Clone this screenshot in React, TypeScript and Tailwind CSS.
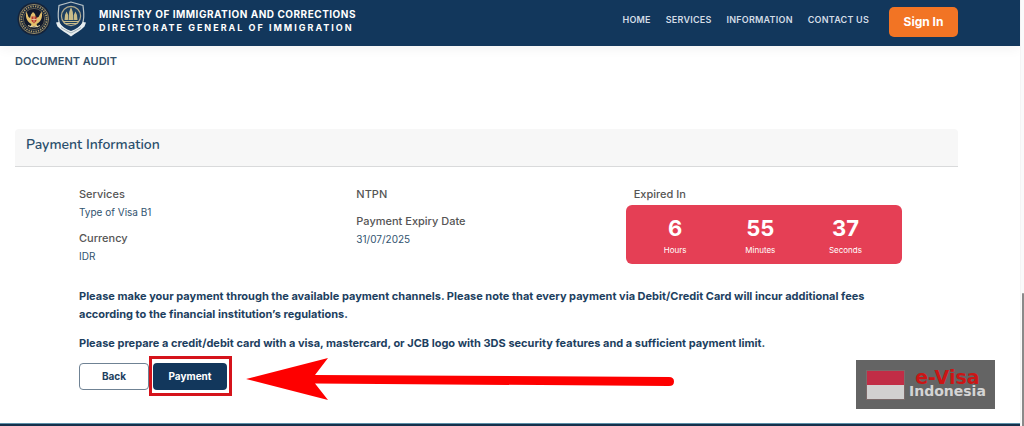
import React from "react";

const navItems = ["Home", "Services", "Information", "Contact Us"];

const countdown = [
  { value: "6", label: "Hours" },
  { value: "55", label: "Minutes" },
  { value: "37", label: "Seconds" },
];

function GarudaLogo() {
  return (
    <svg viewBox="0 0 34 34" className="mt-px h-[34px] w-[34px]" aria-hidden="true">
      <circle cx="17" cy="17" r="16.5" fill="#14233a" />
      <circle
        cx="17"
        cy="17"
        r="14.6"
        fill="none"
        stroke="#8d8263"
        strokeWidth="1"
      />
      <circle
        cx="17"
        cy="17"
        r="12.6"
        fill="none"
        stroke="#a99767"
        strokeWidth="1.8"
        strokeDasharray="1.3 1.1"
      />
      <circle cx="17" cy="17" r="10.6" fill="#10182a" stroke="#8d8263" strokeWidth=".6" />
      <path
        d="M9.500 9.500c-1.500 5 0 10 5 12.500l-1.500 3.500 4-1.500 4 1.500-1.500-3.500c5-2.500 6.500-7.500 5-12.500l-3 5.500-2.500 1-1-4-2-2-2 2.500-1 3.500-1.500-1z"
        fill="#e3bf6c"
      />
      <path d="M14.500 14.500h5v4.500L17 21.500 14.500 19z" fill="#b5352b" />
      <path d="M17 14.500v6M14.500 17.500h5" stroke="#f1dfb0" strokeWidth=".7" />
      <path d="M11 23.600c4 1.800 8 1.800 12 0" stroke="#e9dcae" fill="none" />
    </svg>
  );
}

function ImmigrationLogo() {
  return (
    <svg viewBox="0 0 32 36" className="h-9 w-8" aria-hidden="true">
      <path
        d="M16 1 4 4.500C3.500 10 2 16 4.500 22.500 7 27.500 11 30 16 33c5-3 9-5.500 11.500-10.500C30 16 28.500 10 28 4.500z"
        fill="#17395e"
        stroke="#b9c4c8"
        strokeWidth="1.200"
      />
      <circle cx="16" cy="15" r="9.600" fill="#1d3f60" stroke="#b3ab8d" strokeWidth="1.200" />
      <path
        d="M16 6 14.200 11l-.7 8h5l-.7-8zM11.600 10.500 10 14l-.5 5h3.400l.3-5zM20.400 10.500 18.800 14l.3 5h3.400l-.5-5z"
        fill="#c9bb88"
      />
      <path d="M8 20.500h16M9.500 22.500h13" stroke="#c9bb88" strokeWidth="1.100" />
      <path
        d="M1 21.500 4 21c2.500 4.500 7 7 12 9 5-2 9.500-4.500 12-9l3 .5-1.500 4C26 29.500 20.500 32 16 35.500 11.500 32 6 29.500 2.500 25.500z"
        fill="#e7edef"
      />
      <path d="M6 26.500c3 2 6 3.500 10 5.500 4-2 7-3.500 10-5.500" stroke="#8fa0a8" strokeWidth=".8" fill="none" />
    </svg>
  );
}

function Field({ label, value }: { label: string; value?: string }) {
  return (
    <div className="mb-[7px]">
      <dt className="text-[11px] font-medium leading-5 text-[#555555]">
        {label}
      </dt>
      {value && (
        <dd className="text-[10px] leading-[17px] text-[#31536f]">{value}</dd>
      )}
    </div>
  );
}

function Header() {
  return (
    <header className="h-[46px] bg-[#12375c] pl-[17px] pr-[62px] shadow-[0_2px_12px_rgba(0,0,0,0.06)]">
      <div className="flex h-[42px] items-center justify-between">
        <a href="#" className="flex h-[42px] items-start gap-1 pt-px">
          <GarudaLogo />
          <ImmigrationLogo />
          <span className="ml-2 flex flex-col pt-[6px] text-white">
            <span className="text-[10px] font-bold leading-[14px] tracking-wider">
              MINISTRY OF IMMIGRATION AND CORRECTIONS
            </span>
            <span className="text-[9px] font-bold leading-[14px] tracking-[2px]">
              DIRECTORATE GENERAL OF IMMIGRATION
            </span>
          </span>
        </a>
        <div className="flex items-center gap-5">
          <nav className="flex items-center gap-[15px] pb-[2px]">
            {navItems.map((item) => (
              <a
                key={item}
                href="#"
                className="text-[9px] font-semibold uppercase leading-4 tracking-wide text-[#d3dce6]"
              >
                {item}
              </a>
            ))}
          </nav>
          <button
            type="button"
            className="mt-px h-[30px] w-[69px] rounded-[5px] bg-[#f27424] text-[12px] font-bold text-white"
          >
            Sign In
          </button>
        </div>
      </div>
    </header>
  );
}

function Watermark() {
  return (
    <div className="absolute right-[29px] top-[360px] flex h-[49px] w-[139px] items-center gap-1 bg-[#646464] pl-[10px]">
      <div className="h-[30px] w-[39px] shrink-0 border border-[#7b6a6a] bg-[#d2d0d0]">
        <div className="h-[14px] bg-[#c12d46]"></div>
      </div>
      <div className="flex flex-col items-center pb-[2px] font-['DejaVu_Sans'] font-bold">
        <span className="text-[19px] leading-[14px] text-[#cb1515]">e-Visa</span>
        <span className="text-[14px] leading-[14px] text-[#d4d4d4]">
          Indonesia
        </span>
      </div>
    </div>
  );
}

export default function App() {
  return (
    <div className="relative flex h-screen overflow-hidden bg-white font-['Inter',sans-serif]">
      <div className="flex min-w-0 flex-1 flex-col">
        <Header />
        <main className="flex-1 pl-[15px] pr-[62px]">
          <h1 className="mt-[5px] text-[11px] font-semibold leading-5 text-[#35526a]">
            DOCUMENT AUDIT
          </h1>
          <section className="mt-[58px]">
            <h2 className="h-[38px] rounded-t border-b border-[#d9dadb] bg-[#f7f7f7] pl-[11px] font-['Nunito','Lato',sans-serif] text-[14px] font-semibold leading-8 text-[#2b4f6c]">
              Payment Information
            </h2>
            <div className="pl-16 pr-[47px] pt-[17px]">
              <div className="grid grid-cols-3">
                <dl>
                  <Field label="Services" value="Type of Visa B1" />
                  <Field label="Currency" value="IDR" />
                </dl>
                <dl>
                  <Field label="NTPN" />
                  <Field label="Payment Expiry Date" value="31/07/2025" />
                </dl>
                <div>
                  <p className="text-[11px] font-medium leading-5 text-[#555555]">
                    Expired In
                  </p>
                  <div className="-ml-2 mr-[9px] mt-px grid h-[59px] grid-cols-3 rounded-md bg-[#e53f55] pl-[7px] pr-[14px] pt-[11px] text-center text-white">
                    {countdown.map((item) => (
                      <div key={item.label}>
                        <p className="text-[22px] font-bold leading-6">
                          {item.value}
                        </p>
                        <p className="text-[8px] leading-5">{item.label}</p>
                      </div>
                    ))}
                  </div>
                </div>
              </div>
              <div className="mt-[15px] text-[11px] font-bold leading-[18px] text-[#1d3f5f]">
                <p>
                  Please make your payment through the available payment
                  channels. Please note that every payment via Debit/Credit Card
                  will incur additional fees according to the financial
                  institution’s regulations.
                </p>
                <p className="mt-[11px]">
                  Please prepare a credit/debit card with a visa, mastercard, or
                  JCB logo with 3DS security features and a sufficient payment
                  limit.
                </p>
              </div>
              <div className="mt-[11px] flex gap-1 text-[10px] font-bold">
                <button
                  type="button"
                  className="h-[27px] w-[70px] rounded border border-[#6f8294] text-[#1d3f5f]"
                >
                  Back
                </button>
                <div className="relative">
                  <button
                    type="button"
                    className="h-[27px] w-[74px] rounded bg-[#12375c] text-white"
                  >
                    Payment
                  </button>
                  <span className="pointer-events-none absolute -bottom-[6px] -left-1 -right-[5px] -top-[7px] border-[3px] border-[#d5131b]"></span>
                  <svg
                    viewBox="0 0 428 44"
                    className="absolute -top-[6px] left-[93px] h-[44px] w-[428px] max-w-none"
                    aria-hidden="true"
                  >
                    <path
                      d="M0 22 82 1 69 18 423 20Q428 20 428 24.500T423 29L69 26.500 82 43z"
                      fill="#fe0000"
                    />
                  </svg>
                </div>
              </div>
            </div>
          </section>
        </main>
        <footer className="h-[3px] border-t border-[#5d8fa8] bg-[#14304b]"></footer>
      </div>
      <div className="flex w-1 flex-col justify-end border-l border-[#f4f4f4] bg-[#fafafa]">
        <div className="ml-px h-[133px] rounded-t bg-[#8a8a8a]"></div>
      </div>
      <Watermark />
    </div>
  );
}
